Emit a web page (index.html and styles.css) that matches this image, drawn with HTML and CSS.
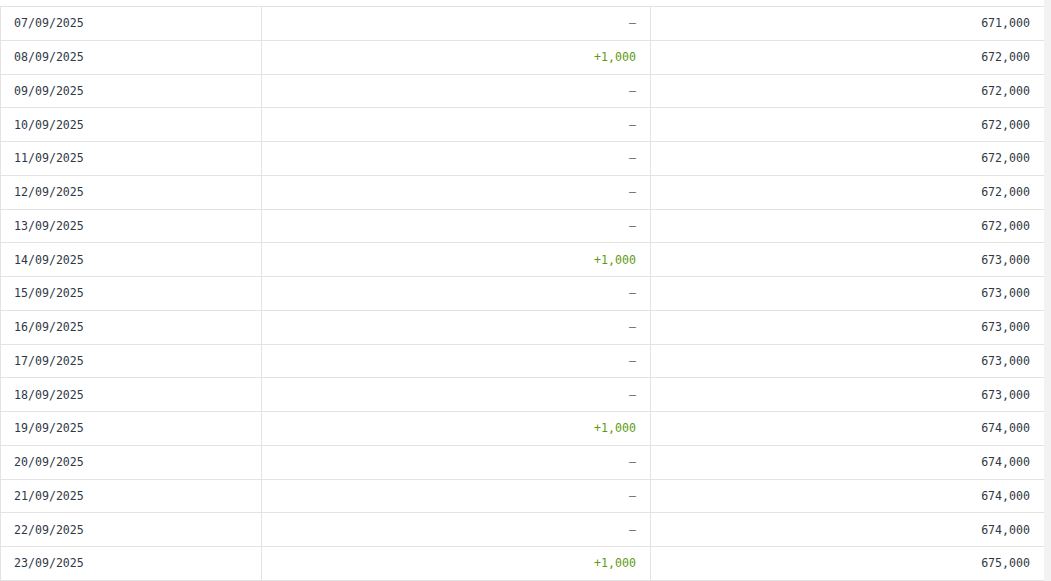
FILE: index.html
```html
<!DOCTYPE html>
<html>
<head>
<meta charset="utf-8">
<link rel="stylesheet" href="styles.css">
</head>
<body>
<div class="page">
  <div class="main">
    <table class="ledger">
      <colgroup><col class="c1"><col class="c2"><col class="c3"></colgroup>
      <tbody>
        <tr><td>07/09/2025</td><td class="num dash">–</td><td class="num total">671,000</td></tr>
        <tr><td>08/09/2025</td><td class="num plus">+1,000</td><td class="num total">672,000</td></tr>
        <tr><td>09/09/2025</td><td class="num dash">–</td><td class="num total">672,000</td></tr>
        <tr><td>10/09/2025</td><td class="num dash">–</td><td class="num total">672,000</td></tr>
        <tr><td>11/09/2025</td><td class="num dash">–</td><td class="num total">672,000</td></tr>
        <tr><td>12/09/2025</td><td class="num dash">–</td><td class="num total">672,000</td></tr>
        <tr><td>13/09/2025</td><td class="num dash">–</td><td class="num total">672,000</td></tr>
        <tr><td>14/09/2025</td><td class="num plus">+1,000</td><td class="num total">673,000</td></tr>
        <tr><td>15/09/2025</td><td class="num dash">–</td><td class="num total">673,000</td></tr>
        <tr><td>16/09/2025</td><td class="num dash">–</td><td class="num total">673,000</td></tr>
        <tr><td>17/09/2025</td><td class="num dash">–</td><td class="num total">673,000</td></tr>
        <tr><td>18/09/2025</td><td class="num dash">–</td><td class="num total">673,000</td></tr>
        <tr><td>19/09/2025</td><td class="num plus">+1,000</td><td class="num total">674,000</td></tr>
        <tr><td>20/09/2025</td><td class="num dash">–</td><td class="num total">674,000</td></tr>
        <tr><td>21/09/2025</td><td class="num dash">–</td><td class="num total">674,000</td></tr>
        <tr><td>22/09/2025</td><td class="num dash">–</td><td class="num total">674,000</td></tr>
        <tr><td>23/09/2025</td><td class="num plus">+1,000</td><td class="num total">675,000</td></tr>
      </tbody>
    </table>
  </div>
  <div class="track"></div>
</div>
</body>
</html>
```

FILE: styles.css
```css
html, body {
  margin: 0;
  padding: 0;
  background: #ffffff;
}
.page {
  display: flex;
  width: 1051px;
  height: 581px;
  overflow: hidden;
}
.main {
  width: 1044px;
  padding-top: 6px;
  box-sizing: border-box;
}
.track {
  flex: 1;
  background: #f2f2f2;
}
.ledger {
  width: 1044px;
  border-collapse: collapse;
  table-layout: fixed;
  font-family: "DejaVu Sans Mono", monospace;
  font-size: 11.6px;
  color: #303846;
}
.c1 { width: 261px; }
.c2 { width: 389px; }
.c3 { width: 394px; }
.ledger td {
  border: 1px solid #e3e3e3;
  height: 33.76px;
  padding: 0 14px 0 13px;
  box-sizing: border-box;
  vertical-align: middle;
  white-space: nowrap;
}
.num { text-align: right; }
.total { padding-right: 15px; }
.dash { color: #6f6f6f; }
.plus { color: #5e9c10; }
```
